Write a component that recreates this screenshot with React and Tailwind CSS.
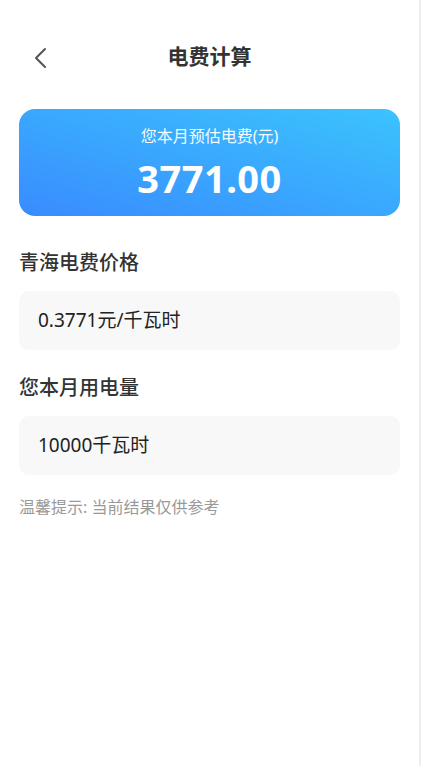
const font = { fontFamily: '"Noto Sans", "Noto Sans CJK SC", sans-serif' };

const Field = ({ label, value, top }) => (
  <div className={top}>
    <div className="text-[20px] leading-[28px] font-medium text-[#333333]">{label}</div>
    <div className="mt-[14px] h-[59px] rounded-[10px] bg-[#f8f8f8] flex items-center px-[19px] text-[19px] text-[#222222]">
      {value}
    </div>
  </div>
);

export default function App() {
  return (
    <div className="flex w-[422px] h-[766px] bg-white" style={font}>
      <div className="w-[419px] flex flex-col">
        <div className="h-[42px]" />
        <div className="relative h-[30px] flex items-center justify-center">
          <svg
            className="absolute left-[33px] top-[5px]"
            width="16"
            height="22"
            viewBox="0 0 16 22"
            fill="none"
            stroke="#555555"
            strokeWidth="2"
            strokeLinecap="round"
            strokeLinejoin="round"
          >
            <path d="M12 2 L3 11 L12 20" />
          </svg>
          <span className="text-[21px] font-bold text-[#333333]">电费计算</span>
        </div>
        <div className="px-[19px] pt-[37px]">
          <div className="h-[107px] rounded-[16px] bg-gradient-to-tr from-[#3a8bfe] to-[#3cc3fd] flex flex-col items-center text-white">
            <div className="mt-[16px] text-[16px] leading-[22px] opacity-95">您本月预估电费(元)</div>
            <div className="mt-[8px] text-[38px] leading-[46px] font-bold tracking-[0.5px]">3771.00</div>
          </div>
          <Field top="mt-[33px]" label="青海电费价格" value="0.3771元/千瓦时" />
          <Field top="mt-[24px]" label="您本月用电量" value="10000千瓦时" />
          <div className="mt-[21px] text-[16px] leading-[22px] text-[#999999]">温馨提示: 当前结果仅供参考</div>
        </div>
      </div>
      <div className="w-[2px] bg-[#eeeeee]" />
    </div>
  );
}
